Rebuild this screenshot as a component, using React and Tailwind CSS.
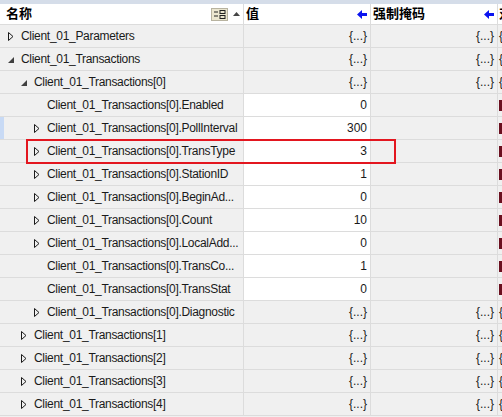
import React from 'react';

// Lignes de l'arbre : niveau, état, nom, valeur, masque forcé
const rows = [
  { level: 0, state: 'closed', name: 'Client_01_Parameters', value: '{...}', force: '{...}' },
  { level: 0, state: 'open', name: 'Client_01_Transactions', value: '{...}', force: '{...}' },
  { level: 1, state: 'open', name: 'Client_01_Transactions[0]', value: '{...}', force: '{...}' },
  { level: 2, state: 'none', name: 'Client_01_Transactions[0].Enabled', value: '0', edit: true },
  { level: 2, state: 'closed', name: 'Client_01_Transactions[0].PollInterval', value: '300', edit: true, selected: true },
  { level: 2, state: 'closed', name: 'Client_01_Transactions[0].TransType', value: '3', edit: true },
  { level: 2, state: 'closed', name: 'Client_01_Transactions[0].StationID', value: '1', edit: true },
  { level: 2, state: 'closed', name: 'Client_01_Transactions[0].BeginAd...', value: '0', edit: true },
  { level: 2, state: 'closed', name: 'Client_01_Transactions[0].Count', value: '10', edit: true },
  { level: 2, state: 'closed', name: 'Client_01_Transactions[0].LocalAdd...', value: '0', edit: true },
  { level: 2, state: 'none', name: 'Client_01_Transactions[0].TransCo...', value: '1', edit: true },
  { level: 2, state: 'none', name: 'Client_01_Transactions[0].TransStat', value: '0', edit: true },
  { level: 2, state: 'closed', name: 'Client_01_Transactions[0].Diagnostic', value: '{...}', force: '{...}' },
  { level: 1, state: 'closed', name: 'Client_01_Transactions[1]', value: '{...}', force: '{...}' },
  { level: 1, state: 'closed', name: 'Client_01_Transactions[2]', value: '{...}', force: '{...}' },
  { level: 1, state: 'closed', name: 'Client_01_Transactions[3]', value: '{...}', force: '{...}' },
  { level: 1, state: 'closed', name: 'Client_01_Transactions[4]', value: '{...}', force: '{...}' },
];

const indents = ['pl-[4px]', 'pl-[17px]', 'pl-[30px]'];

function Toggle({ state }) {
  if (state === 'closed') {
    return (
      <svg width="6" height="9" viewBox="0 0 6 9" className="shrink-0">
        <path d="M0.5 0.5 L5 4.5 L0.5 8.5 Z" fill="none" stroke="#1a1a1a" strokeWidth="1" />
      </svg>
    );
  }
  if (state === 'open') {
    return (
      <svg width="6" height="9" viewBox="0 0 6 9" className="shrink-0">
        <path d="M6 2 L6 8 L0 8 Z" fill="#404040" />
      </svg>
    );
  }
  return <span className="w-[6px] shrink-0" />;
}

function BlueArrow() {
  return (
    <svg width="10" height="9" viewBox="0 0 10 9">
      <path d="M0 4.5 L5 0 L5 3 L10 3 L10 6 L5 6 L5 9 Z" fill="#0a14f0" />
    </svg>
  );
}

function App() {
  return (
    <div
      className="relative w-[502px] h-[417px] overflow-hidden bg-[#f0f0f0] text-[12px] text-[#1a1a1a]"
      style={{ fontFamily: '"Liberation Sans", "Noto Sans CJK SC", sans-serif' }}
    >
      <div className="h-[4px] bg-[#d5dde9]" />

      {/* En-tête des colonnes */}
      <div className="flex h-[21px] bg-white border-b border-[#dcdcdc] font-bold text-black">
        <div className="w-[4px]" />
        <div className="w-[240px] flex items-center border-r border-[#dcdcdc] pl-[2px] pr-[3px]">
          <span className="text-[13px]">名称</span>
          <span className="ml-auto flex items-center gap-[5px]">
            <svg width="17" height="13" viewBox="0 0 17 13">
              <rect x="0.5" y="0.5" width="16" height="12" fill="#ebe6cf" stroke="#b8b3a0" />
              <path d="M3 4 H7 M3 8 H7" stroke="#222" strokeWidth="1.2" />
              <rect x="9" y="2.5" width="5" height="3" fill="none" stroke="#222" />
              <rect x="9" y="7.5" width="5" height="3" fill="none" stroke="#222" />
            </svg>
            <svg width="7" height="4" viewBox="0 0 7 4">
              <path d="M0 4 L3.5 0 L7 4 Z" fill="#444" />
            </svg>
          </span>
        </div>
        <div className="w-[127px] flex items-center border-r border-[#dcdcdc] pl-[2px] pr-[3px]">
          <span className="text-[13px]">值</span>
          <span className="ml-auto">
            <BlueArrow />
          </span>
        </div>
        <div className="w-[127px] flex items-center border-r border-[#dcdcdc] pl-[2px] pr-[3px]">
          <span className="text-[13px]">强制掩码</span>
          <span className="ml-auto">
            <BlueArrow />
          </span>
        </div>
        <div className="flex-1 flex items-center pl-[1px] overflow-hidden">
          <span className="text-[13px] whitespace-nowrap">对比</span>
        </div>
      </div>

      {/* Lignes de l'arbre */}
      {rows.map((row) => (
        <div key={row.name} className="flex h-[23px] border-b border-[#dcdcdc]">
          <div className={`w-[4px] ${row.selected ? 'bg-[#c8daf5]' : ''}`} />
          <div
            className={`w-[240px] flex items-center gap-[7px] border-r border-[#dcdcdc] whitespace-nowrap overflow-hidden tracking-[-0.3px] ${indents[row.level]}`}
          >
            <Toggle state={row.state} />
            <span>{row.name}</span>
          </div>
          <div
            className={`w-[127px] flex items-center justify-end pr-[3px] border-r border-[#dcdcdc] ${
              row.edit ? 'bg-white' : ''
            }`}
          >
            {row.value}
          </div>
          <div className="w-[127px] flex items-center justify-end pr-[3px] border-r border-[#dcdcdc]">
            {row.force}
          </div>
          <div className="flex-1 flex items-center pl-[1px] overflow-hidden">
            {row.force ? (
              <span>{'{'}</span>
            ) : (
              <span className="w-[3px] h-[11px] bg-[#6b0f1f]" />
            )}
          </div>
        </div>
      ))}

      {/* Cadre rouge de mise en évidence */}
      <div className="absolute left-[26px] top-[139px] w-[370px] h-[25px] border-2 border-[#e3161f]" />
    </div>
  );
}

export default App;
